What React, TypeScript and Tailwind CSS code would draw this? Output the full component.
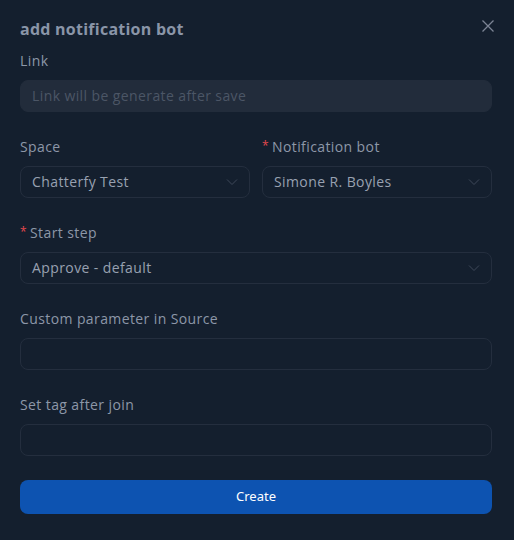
import React from "react";

const font = { fontFamily: '"Open Sans", "DejaVu Sans", sans-serif' };

function Chevron() {
  return (
    <svg width="12" height="12" viewBox="0 0 12 12" fill="none" className="shrink-0">
      <path d="M1 3.5 L6 8.5 L11 3.5" stroke="#3e4859" strokeWidth="1" />
    </svg>
  );
}

function Label({ text, required }: { text: string; required?: boolean }) {
  return (
    <div className="h-[22px] leading-[22px] mb-2 text-[14px] tracking-[0.4px] text-[#8d97a8] flex items-center">
      {required && <span className="text-[#e5484d] text-[12px] mr-[3px] relative top-[-1px]">*</span>}
      {text}
    </div>
  );
}

function Select({ value }: { value: string }) {
  return (
    <div className="h-8 rounded-lg border border-[#242e3e] flex items-center justify-between pl-[11px] pr-[11px] text-[14px] tracking-[0.4px] text-[#98a1b1]">
      <span className="relative top-[-1px]">{value}</span>
      <Chevron />
    </div>
  );
}

function Input() {
  return <div className="h-8 rounded-lg border border-[#242e3e]" />;
}

export default function App() {
  return (
    <div className="w-[514px] h-[540px] bg-[#141f2e] pl-5 pr-[22px] pt-[18px] relative" style={font}>
      <button className="absolute right-[19px] top-[19px] w-[14px] h-[14px] flex items-center justify-center">
        <svg width="14" height="14" viewBox="0 0 14 14">
          <path d="M1.5 1.5 L12.5 12.5 M12.5 1.5 L1.5 12.5" stroke="#7c8494" strokeWidth="1.3" />
        </svg>
      </button>
      <div className="h-[22px] leading-[22px] text-[16px] font-bold tracking-[0.25px] text-[#8a95a8] mb-[10px]">
        add notification bot
      </div>

      <div className="mb-6">
        <Label text="Link" />
        <div className="h-8 rounded-lg bg-[#222c3b] border border-[#222c3b] flex items-center pl-[11px] text-[14px] tracking-[0.4px] text-[#4c5666]">
          <span className="relative top-[-1px]">Link will be generate after save</span>
        </div>
      </div>

      <div className="grid grid-cols-2 gap-3 mb-6">
        <div>
          <Label text="Space" />
          <Select value="Chatterfy Test" />
        </div>
        <div>
          <Label text="Notification bot" required />
          <Select value="Simone R. Boyles" />
        </div>
      </div>

      <div className="mb-6">
        <Label text="Start step" required />
        <Select value="Approve - default" />
      </div>

      <div className="mb-6">
        <Label text="Custom parameter in Source" />
        <Input />
      </div>

      <div className="mb-6">
        <Label text="Set tag after join" />
        <Input />
      </div>

      <button
        className="w-full h-[34px] rounded-lg bg-[#0d53b1] text-white text-[13px]"
        style={{ fontFamily: '"Noto Sans", "Open Sans", sans-serif' }}
      >
        Create
      </button>
    </div>
  );
}
